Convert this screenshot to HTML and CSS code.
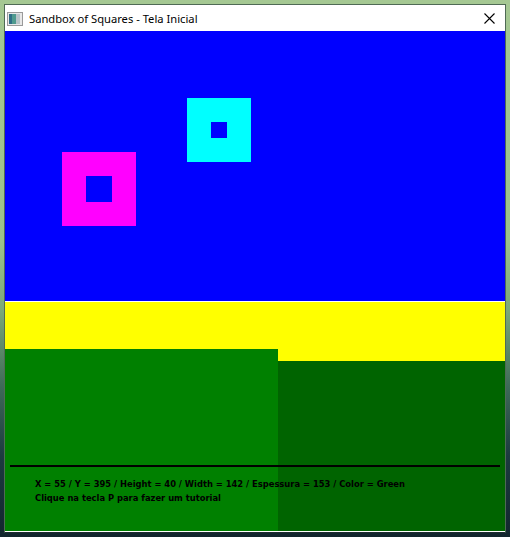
FILE: index.html
```html
<!DOCTYPE html>
<html>
<head>
<meta charset="utf-8">
<link rel="stylesheet" href="styles.css">
</head>
<body>
<div class="desktop">
  <div class="window">
    <div class="titlebar">
      <svg class="appicon" width="16" height="14" viewBox="0 0 16 14">
        <rect x="0.5" y="0.5" width="15" height="13" fill="#e8e8e8" stroke="#9a9a9a"/>
        <rect x="2" y="2" width="7" height="10" fill="#4f9a8e"/>
        <rect x="2" y="2" width="3" height="10" fill="#2f6f86"/>
        <rect x="9" y="2" width="4" height="10" fill="#b8c4c8"/>
      </svg>
      <span class="title">Sandbox of Squares - Tela Inicial</span>
      <svg class="close" width="11" height="11" viewBox="0 0 11 11">
        <path d="M0.5 0.5 L10.5 10.5 M10.5 0.5 L0.5 10.5" stroke="#000" stroke-width="1.1"/>
      </svg>
    </div>
    <div class="canvas">
      <div class="sky">
        <div class="square magenta" style="left:57px;top:121px;width:74px;height:74px;border-width:24px"></div>
        <div class="square cyan" style="left:182px;top:67px;width:64px;height:64px;border-width:24px"></div>
      </div>
      <div class="divider"></div>
      <div class="ground">
        <div class="col col-left"><div class="fill light"></div></div>
        <div class="col col-right"><div class="fill dark"></div></div>
        <div class="hud">
          <div class="hud-line"></div>
          <p class="hud-text">X = 55 / Y = 395 / Height = 40 / Width = 142 / Espessura = 153 / Color = Green</p>
          <p class="hud-text">Clique na tecla P para fazer um tutorial</p>
        </div>
      </div>
    </div>
  </div>
</div>
</body>
</html>
```
FILE: styles.css
```css
html, body {
  margin: 0;
  padding: 0;
  width: 510px;
  height: 537px;
  overflow: hidden;
}
.desktop {
  width: 510px;
  height: 537px;
  padding: 4px;
  box-sizing: border-box;
  background: linear-gradient(180deg, #a5c893 0%, #9cc28a 45%, #7aa878 58%, #3e6a58 72%, #1c3a40 85%, #12262e 100%);
}
.window {
  width: 502px;
  height: 529px;
  border: 1px solid #4f6a55;
  border-bottom-color: #1d2c30;
  box-sizing: border-box;
  display: flex;
  flex-direction: column;
  background: #fff;
}
.titlebar {
  height: 26px;
  display: flex;
  align-items: center;
  background: #fff;
  position: relative;
}
.appicon {
  margin-left: 2px;
  margin-right: 6px;
  margin-top: 1px;
}
.title {
  font-family: "Noto Sans", "Open Sans", sans-serif;
  font-size: 11.2px;
  color: #000;
  margin-top: 1px;
}
.close {
  margin-left: auto;
  margin-right: 10px;
  margin-top: 0px;
}
.canvas {
  width: 500px;
  height: 500px;
  display: flex;
  flex-direction: column;
}
.sky {
  height: 270px;
  background: #0000ff;
  position: relative;
}
.square {
  position: absolute;
  box-sizing: border-box;
  border-style: solid;
  background: #0000ff;
}
.magenta { border-color: #ff00ff; }
.cyan { border-color: #00ffff; }
.divider {
  height: 1px;
  background: #ffffff;
}
.ground {
  flex: 1;
  background: #ffff00;
  display: flex;
  position: relative;
}
.col {
  display: flex;
  flex-direction: column;
}
.col-left {
  width: 273px;
  padding-top: 47px;
}
.col-right {
  flex: 1;
  padding-top: 59px;
}
.fill { flex: 1; }
.light { background: #008000; }
.dark { background: #006400; }
.hud {
  position: absolute;
  left: 5px;
  right: 5px;
  top: 163px;
}
.hud-line {
  height: 2px;
  background: #000;
}
.hud-text {
  margin: 0 0 0 25px;
  font-family: "DejaVu Sans Condensed", "DejaVu Sans", sans-serif;
  font-stretch: condensed;
  font-weight: bold;
  font-size: 9.3px;
  line-height: 14px;
  color: #000;
  white-space: nowrap;
}
.hud-line + .hud-text {
  margin-top: 10px;
}
```
